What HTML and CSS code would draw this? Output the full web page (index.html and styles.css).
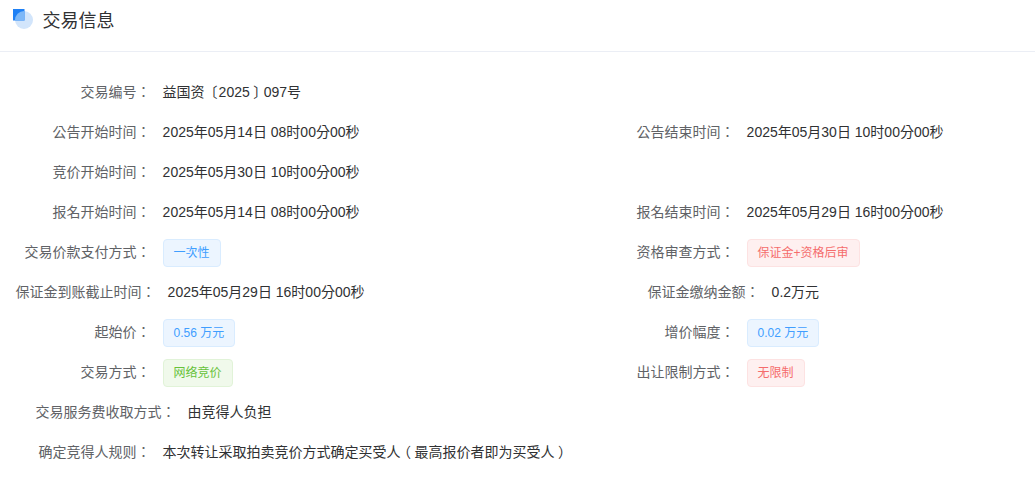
FILE: index.html
```html
<!DOCTYPE html>
<html lang="zh-TW">
<head>
<meta charset="utf-8">
<title>交易信息</title>
<link rel="stylesheet" href="styles.css">
</head>
<body>
<header class="head">
  <svg class="logo" width="22" height="22" viewBox="0 0 22 22" aria-hidden="true">
    <defs><clipPath id="c"><circle cx="12" cy="11" r="9"/></clipPath></defs>
    <circle cx="12" cy="11" r="9" fill="#d2e5fb"/>
    <rect x="1" y="0" width="11.5" height="11.5" fill="#1e80f5"/>
    <rect x="1" y="0" width="11.5" height="11.5" fill="#7db8f8" clip-path="url(#c)"/>
  </svg>
  <h1 class="title">交易信息</h1>
</header>
<main class="form">
  <div class="item"><span class="label">交易编号：</span><span class="value">益国资<span class="punct bracket-open">〔</span>2025<span class="punct">〕</span>097号</span></div>
  <div class="item"></div>
  <div class="item"><span class="label">公告开始时间：</span><span class="value">2025年05月14日 08时00分00秒</span></div>
  <div class="item"><span class="label">公告结束时间：</span><span class="value">2025年05月30日 10时00分00秒</span></div>
  <div class="item"><span class="label">竞价开始时间：</span><span class="value">2025年05月30日 10时00分00秒</span></div>
  <div class="item"></div>
  <div class="item"><span class="label">报名开始时间：</span><span class="value">2025年05月14日 08时00分00秒</span></div>
  <div class="item"><span class="label">报名结束时间：</span><span class="value">2025年05月29日 16时00分00秒</span></div>
  <div class="item"><span class="label">交易价款支付方式：</span><span class="tag blue">一次性</span></div>
  <div class="item"><span class="label">资格审查方式：</span><span class="tag red">保证金+资格后审</span></div>
  <div class="item"><span class="label wide">保证金到账截止时间：</span><span class="value">2025年05月29日 16时00分00秒</span></div>
  <div class="item"><span class="label shift">保证金缴纳金额：</span><span class="value">0.2万元</span></div>
  <div class="item"><span class="label">起始价：</span><span class="tag blue">0.56 万元</span></div>
  <div class="item"><span class="label">增价幅度：</span><span class="tag blue">0.02 万元</span></div>
  <div class="item"><span class="label">交易方式：</span><span class="tag green">网络竞价</span></div>
  <div class="item"><span class="label">出让限制方式：</span><span class="tag red">无限制</span></div>
  <div class="item full"><span class="label fee">交易服务费收取方式：</span><span class="value">由竞得人负担</span></div>
  <div class="item full"><span class="label">确定竞得人规则：</span><span class="value">本次转让采取拍卖竞价方式确定买受人<span class="punct">（</span>最高报价者即为买受人<span class="punct">）</span></span></div>
</main>
</body>
</html>
```
FILE: styles.css
```css
* { box-sizing: border-box; }
html, body { margin: 0; padding: 0; background: #fff; }
body {
  font-family: "Liberation Sans", "Noto Sans CJK TC", sans-serif;
  font-size: 14px;
  color: #303133;
  overflow: hidden;
  text-spacing-trim: space-all;
}
.head {
  height: 52px;
  border-bottom: 1px solid #ebeef5;
  padding-left: 12px;
  display: flex;
  align-items: flex-start;
}
.logo { margin-top: 9px; flex: none; }
.title {
  margin: 9px 0 0 8.4px;
  font-size: 18px;
  font-weight: 400;
  line-height: 24px;
  color: #303133;
}
.form {
  display: grid;
  grid-template-columns: 584px 1fr;
  padding: 20px 0 0 15.6px;
}
.item { display: flex; align-items: center; height: 40px; }
.item.full { grid-column: 1 / -1; }
.label {
  width: 147px;
  flex: none;
  padding: 0 12px 2px 0;
  text-align: right;
  color: #606266;
  white-space: nowrap;
}
.label.wide { width: 152px; }
.label.fee { width: 152px; margin-left: 20px; }
.label.shift { width: 124px; margin-left: 48px; }
.value { white-space: nowrap; padding-bottom: 2px; }
.punct {
  display: inline-block;
  width: 14px;
  text-align: center;
  font-feature-settings: "halt";
}
.punct.bracket-open { text-align: right; padding-right: 1px; }
.tag {
  height: 28px;
  line-height: 26px;
  padding: 0 10px;
  margin-top: 2px;
  font-size: 12px;
  border: 1px solid;
  border-radius: 4px;
  white-space: nowrap;
}
.blue { background: #ecf5ff; border-color: #d9ecff; color: #409eff; }
.red { background: #fef0f0; border-color: #fde2e2; color: #f56c6c; }
.green { background: #f0f9eb; border-color: #e1f3d8; color: #67c23a; }
```
